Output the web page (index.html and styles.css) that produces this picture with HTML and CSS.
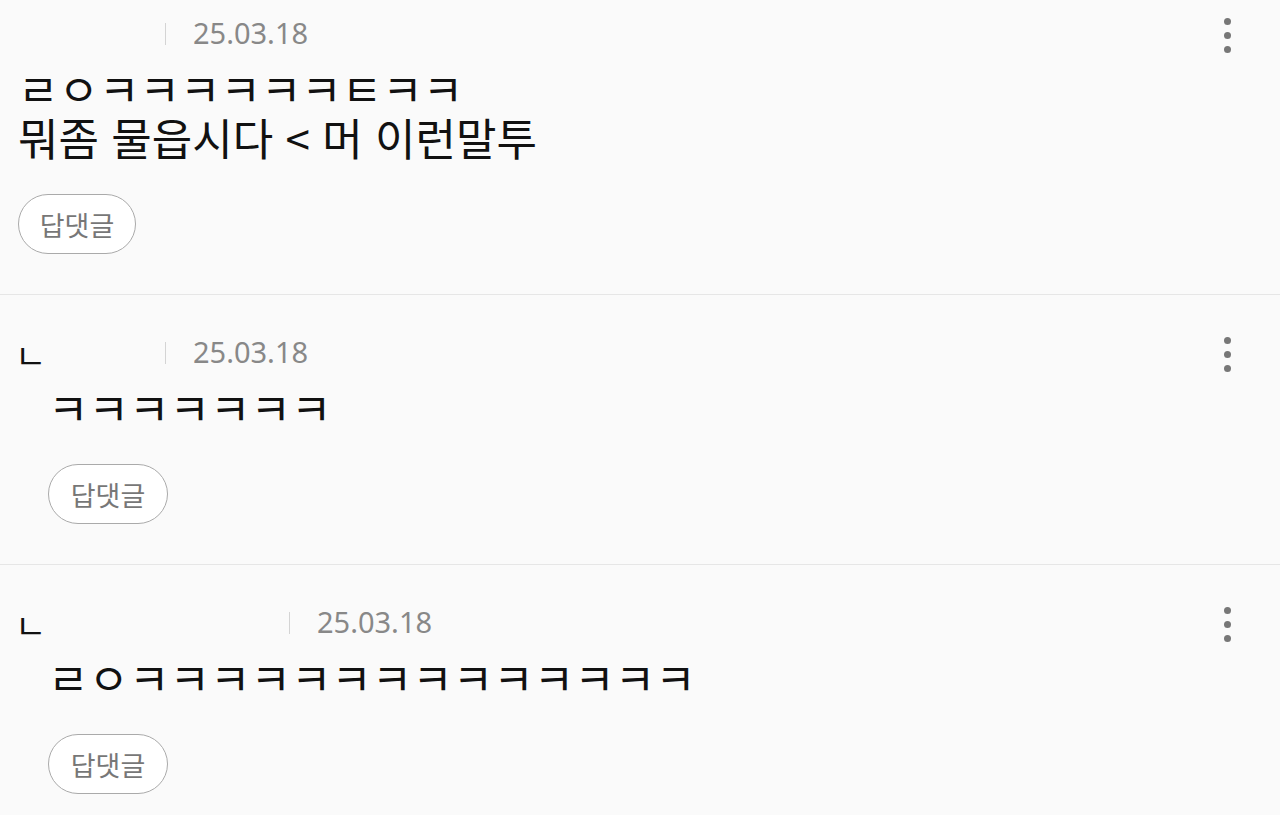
FILE: index.html
```html
<!DOCTYPE html>
<html lang="ko">
<head>
  <meta charset="UTF-8">
  <title>댓글</title>
  <link rel="stylesheet" href="styles.css">
</head>
<body>
  <div class="comments">
    <div class="comment">
      <div class="head">
        <span class="who"></span>
        <span class="sep"></span>
        <span class="date">25.03.18</span>
        <span class="more"><i></i><i></i><i></i></span>
      </div>
      <div class="text">
        <p>ㄹㅇㅋㅋㅋㅋㅋㅋㅌㅋㅋ</p>
        <p>뭐좀 물읍시다 &lt; 머 이런말투</p>
      </div>
      <button class="reply-btn">답댓글</button>
    </div>

    <div class="comment reply">
      <div class="head">
        <span class="who"><span class="mark">ㄴ</span></span>
        <span class="sep"></span>
        <span class="date">25.03.18</span>
        <span class="more"><i></i><i></i><i></i></span>
      </div>
      <div class="text"><p>ㅋㅋㅋㅋㅋㅋㅋ</p></div>
      <button class="reply-btn">답댓글</button>
    </div>

    <div class="comment reply">
      <div class="head">
        <span class="who long"><span class="mark">ㄴ</span></span>
        <span class="sep"></span>
        <span class="date">25.03.18</span>
        <span class="more"><i></i><i></i><i></i></span>
      </div>
      <div class="text"><p>ㄹㅇㅋㅋㅋㅋㅋㅋㅋㅋㅋㅋㅋㅋㅋㅋ</p></div>
      <button class="reply-btn">답댓글</button>
    </div>
  </div>
</body>
</html>
```

FILE: styles.css
```css
html, body {
  margin: 0;
  background: #fafafa;
  font-family: 'Noto Sans', 'Noto Sans CJK KR', sans-serif;
  overflow: hidden;
}

.comments {
  margin-top: -24px;
}

.comment {
  padding: 38px 49px 40px 18px;
  border-bottom: 1px solid #e6e6e6;
}

.head {
  display: flex;
  align-items: center;
  height: 40px;
}

.who {
  width: 147px;
  height: 40px;
  display: flex;
  align-items: center;
}

.who.long {
  width: 271px;
}

.mark {
  font-family: 'Noto Sans CJK KR', sans-serif;
  font-size: 34px;
  color: #111;
  line-height: 1;
  margin-left: -3px;
  margin-top: 4px;
}

.sep {
  width: 1px;
  height: 22px;
  background: #d4d4d4;
  margin-right: 27px;
}

.date {
  font-size: 29px;
  color: #888;
  margin-top: -3px;
}

.more {
  margin-left: auto;
  display: flex;
  flex-direction: column;
  gap: 7px;
  margin-top: 3px;
}

.more i {
  width: 7px;
  height: 7px;
  border-radius: 50%;
  background: #777;
}

.text {
  margin-top: 10px;
  font-family: 'Noto Sans CJK KR', sans-serif;
  font-size: 44px;
  line-height: 49px;
  color: #111;
}

.text p {
  margin: 0;
  height: 49px;
  white-space: nowrap;
}

.reply .text {
  padding-left: 30px;
}

.reply-btn {
  display: block;
  margin-top: 32px;
  width: 118px;
  height: 60px;
  border: 1.5px solid #aaa;
  border-radius: 30px;
  background: #fff;
  color: #777;
  font-family: 'Noto Sans CJK KR', sans-serif;
  font-size: 27px;
  padding: 0;
}

.reply .reply-btn {
  margin-left: 30px;
  width: 120px;
}
```
